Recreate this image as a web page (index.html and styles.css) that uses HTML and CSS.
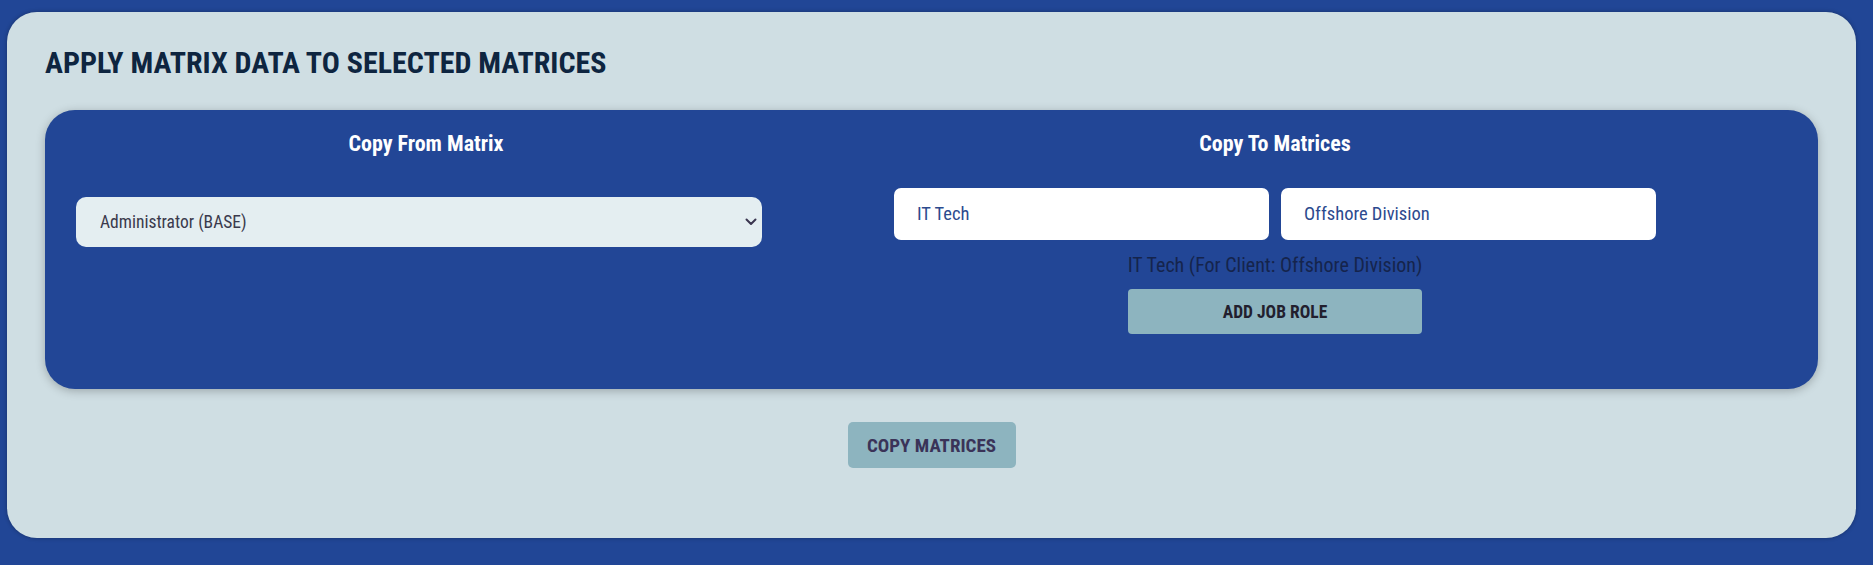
FILE: index.html
```html
<!DOCTYPE html>
<html lang="en">
<head>
<meta charset="utf-8">
<title>Apply Matrix Data</title>
<link rel="stylesheet" href="styles.css">
</head>
<body>
<main class="panel">
  <h1 class="panel-title">APPLY MATRIX DATA TO SELECTED MATRICES</h1>
  <section class="matrix-card">
    <div class="col col-from">
      <h2 class="col-title">Copy From Matrix</h2>
      <div class="select-wrap">
        <select class="matrix-select">
          <option>Administrator (BASE)</option>
        </select>
        <svg class="chev" width="12" height="8" viewBox="0 0 12 8" aria-hidden="true"><path d="M1.5 1.5 6 6l4.5-4.5" fill="none" stroke="#3b3650" stroke-width="2" stroke-linecap="round" stroke-linejoin="round"/></svg>
      </div>
    </div>
    <div class="col col-to">
      <h2 class="col-title">Copy To Matrices</h2>
      <div class="inputs">
        <input class="text-input" type="text" value="IT Tech">
        <input class="text-input" type="text" value="Offshore Division">
      </div>
      <div class="role-box">
        <p class="role-caption">IT Tech (For Client: Offshore Division)</p>
        <button class="btn btn-role" type="button">ADD JOB ROLE</button>
      </div>
    </div>
  </section>
  <div class="actions">
    <button class="btn btn-copy" type="button">COPY MATRICES</button>
  </div>
</main>
</body>
</html>
```

FILE: styles.css
```css
html, body {
  margin: 0;
  height: 100%;
}

body {
  background: #214696;
  font-family: "Roboto Condensed", Roboto, "Liberation Sans", sans-serif;
  padding: 12px 17px 0 7px;
  box-sizing: border-box;
}

.panel {
  background: #cfdee3;
  border-radius: 30px;
  padding: 34px 38px 0;
  height: 526px;
  box-sizing: border-box;
  box-shadow: 0 0 4px rgba(0, 0, 0, 0.3);
}

.panel-title {
  margin: 0 0 30px;
  font-size: 30px;
  line-height: 34px;
  font-weight: 700;
  color: #0e2540;
}

.matrix-card {
  display: flex;
  background: #224696;
  border-radius: 30px;
  padding: 22px 44px 55px 31px;
  box-shadow: 0 2px 10px rgba(0, 0, 0, 0.25);
}

.col-from {
  width: 700px;
}

.col-to {
  width: 998px;
}

.col-title {
  margin: 0;
  text-align: center;
  font-size: 22px;
  line-height: 24px;
  font-weight: 700;
  color: #ffffff;
}

.select-wrap {
  position: relative;
  width: 686px;
  margin-top: 41px;
}

.matrix-select {
  display: block;
  width: 100%;
  height: 50px;
  border: 0;
  border-radius: 10px;
  background: #e4eef1;
  padding: 0 0 0 24px;
  font-family: inherit;
  font-size: 17.5px;
  color: #3a3a4c;
  -webkit-appearance: none;
  appearance: none;
  outline: none;
}

.chev {
  position: absolute;
  right: 5px;
  top: 21px;
  pointer-events: none;
}

.inputs {
  display: flex;
  justify-content: center;
  gap: 12px;
  margin-top: 32px;
}

.text-input {
  width: 375px;
  height: 52px;
  box-sizing: border-box;
  border: 0;
  border-radius: 7px;
  padding: 0 23px;
  background: #ffffff;
  font-family: inherit;
  font-size: 18.5px;
  color: #2c4a8e;
  outline: none;
}

.role-box {
  width: fit-content;
  margin: 15px auto 0;
  display: flex;
  flex-direction: column;
}

.role-caption {
  margin: 0;
  font-size: 20px;
  line-height: 20px;
  color: #15244c;
  white-space: nowrap;
}

.btn {
  border: 0;
  font-family: inherit;
  font-weight: 700;
  cursor: pointer;
  background: #8db4bf;
}

.btn-role {
  width: 100%;
  height: 45px;
  margin-top: 14px;
  border-radius: 4px;
  font-size: 17.5px;
  color: #221f2e;
}

.actions {
  display: flex;
  justify-content: center;
  margin-top: 33px;
}

.btn-copy {
  width: 168px;
  height: 46px;
  border-radius: 5px;
  font-size: 19px;
  color: #3a3358;
}
```
